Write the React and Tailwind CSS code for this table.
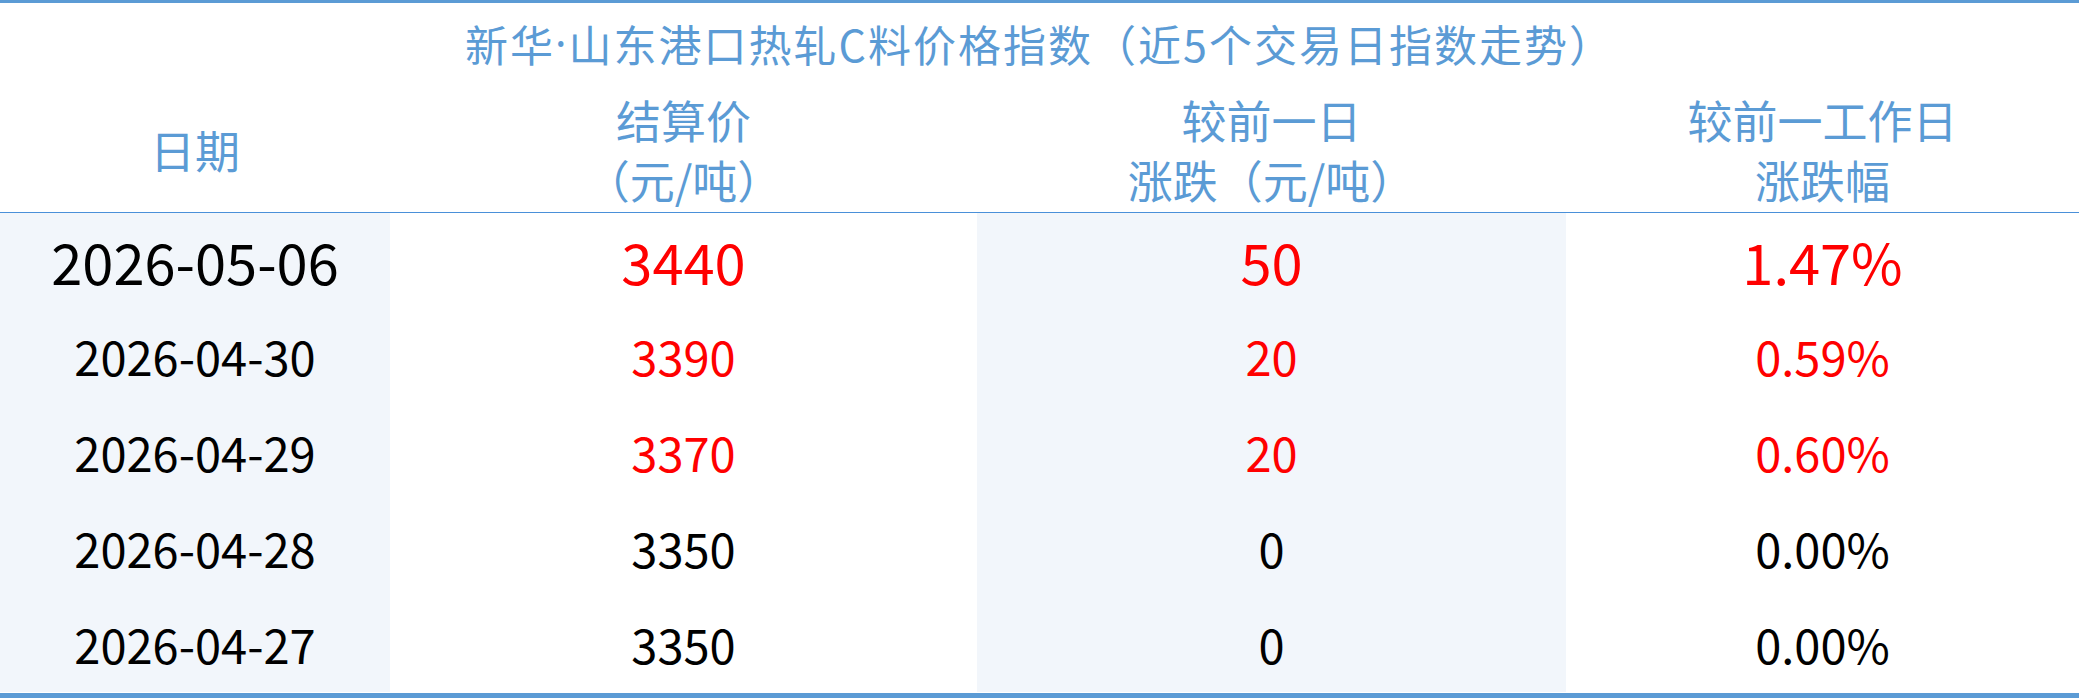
const rows = [
  { date: '2026-05-06', price: '3440', diff: '50', pct: '1.47%', up: true, big: true },
  { date: '2026-04-30', price: '3390', diff: '20', pct: '0.59%', up: true },
  { date: '2026-04-29', price: '3370', diff: '20', pct: '0.60%', up: true },
  { date: '2026-04-28', price: '3350', diff: '0', pct: '0.00%', up: false },
  { date: '2026-04-27', price: '3350', diff: '0', pct: '0.00%', up: false },
]

function App() {
  return (
    <div className="w-[2079px] h-[698px] bg-white flex flex-col border-t-[3px] border-b-[5px] border-[#5b9bd5] font-['Noto_Sans_CJK_SC',sans-serif]">
      {/* Title */}
      <div className="h-[85px] flex items-center justify-center pb-[4px] text-[43px] tracking-[2px] text-[#5b9bd5] leading-none">
        新华<span className="font-['Noto_Sans',sans-serif]">·</span>山东港口热轧C料价格指数（近5个交易日指数走势）
      </div>

      {/* Header */}
      <div className="h-[125px] grid grid-cols-[390px_587px_589px_1fr] border-b border-[#4a90d9] text-[45px] leading-[60px] text-[#5b9bd5] text-center">
        <div className="flex items-center justify-center">日期</div>
        <div className="flex flex-col items-center justify-center">
          <span>结算价</span>
          <span>（元/吨）</span>
        </div>
        <div className="flex flex-col items-center justify-center">
          <span>较前一日</span>
          <span>涨跌（元/吨）</span>
        </div>
        <div className="flex flex-col items-center justify-center">
          <span>较前一工作日</span>
          <span>涨跌幅</span>
        </div>
      </div>

      {/* Body */}
      <div className="flex-1 grid grid-cols-[390px_587px_589px_1fr] grid-rows-[95px_96px_96px_96px_96px]">
        {rows.map((r) => {
          const size = r.big ? 'text-[56px]' : 'text-[47px]'
          const color = r.up ? 'text-[#ff0000]' : 'text-black'
          return [
            <div key={r.date + 'a'} className={`bg-[#f2f6fb] flex items-center justify-center text-black ${size}`}>{r.date}</div>,
            <div key={r.date + 'b'} className={`flex items-center justify-center ${color} ${size}`}>{r.price}</div>,
            <div key={r.date + 'c'} className={`bg-[#f2f6fb] flex items-center justify-center ${color} ${size}`}>{r.diff}</div>,
            <div key={r.date + 'd'} className={`flex items-center justify-center ${color} ${size}`}>{r.pct}</div>,
          ]
        })}
      </div>
    </div>
  )
}

export default App
